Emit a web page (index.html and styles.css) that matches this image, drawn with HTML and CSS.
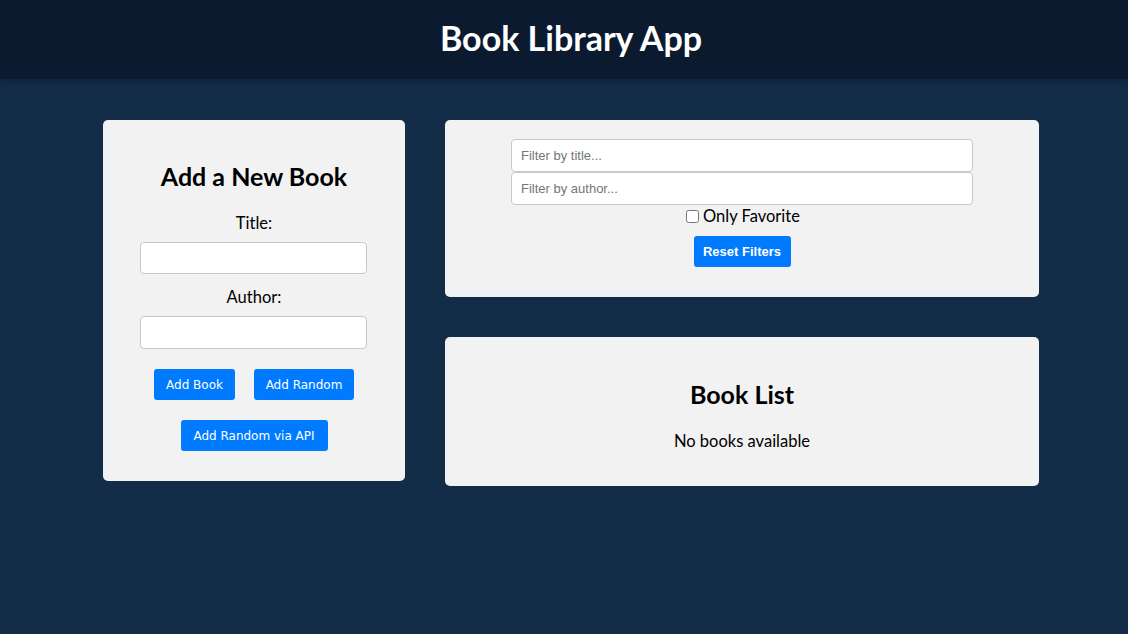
FILE: index.html
```html
<!DOCTYPE html>
<html lang="en">
<head>
<meta charset="utf-8">
<title>Book Library App</title>
<link rel="stylesheet" href="styles.css">
</head>
<body>
<header class="app-header">
  <h1 class="app-title">Book Library App</h1>
</header>
<main class="app-main">
  <section class="card form-card">
    <h2 class="card-title">Add a New Book</h2>
    <label class="field-label label-title" for="title">Title:</label>
    <input class="field-input input-title" id="title" type="text">
    <label class="field-label label-author" for="author">Author:</label>
    <input class="field-input input-author" id="author" type="text">
    <div class="btn-row">
      <button class="btn btn-add">Add Book</button>
      <button class="btn btn-random">Add Random</button>
    </div>
    <div class="btn-row">
      <button class="btn btn-api">Add Random via API</button>
    </div>
  </section>
  <div class="right-col">
    <section class="card filter-card">
      <input class="filter-input" type="text" placeholder="Filter by title...">
      <input class="filter-input" type="text" placeholder="Filter by author...">
      <label class="fav-label"><input type="checkbox" class="fav-check">Only Favorite</label>
      <button class="btn btn-reset">Reset Filters</button>
    </section>
    <section class="card list-card">
      <h2 class="card-title">Book List</h2>
      <p class="empty">No books available</p>
    </section>
  </div>
</main>
</body>
</html>
```

FILE: styles.css
```css
* { box-sizing: border-box; }
html, body { margin: 0; padding: 0; }
body {
  background: #132c48;
  font-family: Lato, "Noto Sans", sans-serif;
  color: #000;
  min-height: 634px;
}
.app-header {
  background: #0b1a2e;
  height: 79px;
  display: flex;
  align-items: center;
  justify-content: center;
  padding-left: 14px;
  box-shadow: 0 2px 6px rgba(0,0,0,0.25);
}
.app-title {
  margin: 0;
  color: #fff;
  font-size: 34px;
  font-weight: 700;
  line-height: 1;
  padding-bottom: 4px;
}
.app-main {
  display: flex;
  align-items: flex-start;
  gap: 40px;
  padding: 41px 89px 0 103px;
}
.card {
  background: #f2f2f2;
  border-radius: 5px;
}
.form-card {
  width: 302px;
  display: flex;
  flex-direction: column;
  align-items: center;
  padding: 42px 0 30px;
}
.card-title {
  margin: 0;
  font-size: 25px;
  font-weight: 700;
  line-height: 29px;
}
.field-label {
  font-size: 16.5px;
  line-height: 19px;
}
.label-title { margin-top: 23px; }
.input-title { margin-top: 9px; }
.label-author { margin-top: 14px; }
.input-author { margin-top: 9px; }
.field-input {
  width: 227px;
  height: 32px;
  border: 1px solid #c8c8c8;
  border-radius: 4px;
  background: #fff;
  margin-left: -1px;
}
.input-author { height: 33px; }
.btn-row {
  display: flex;
  gap: 19px;
  margin-top: 20px;
}
.btn {
  background: #007bff;
  color: #fff;
  border: none;
  border-radius: 3px;
  height: 31px;
  font-family: "DejaVu Sans", Verdana, sans-serif;
  font-size: 12px;
  padding: 0;
  cursor: pointer;
}
.btn-add { width: 81px; }
.btn-random { width: 100px; }
.btn-api { width: 147px; }
.right-col {
  width: 594px;
  display: flex;
  flex-direction: column;
  gap: 40px;
}
.filter-card {
  height: 177px;
  display: flex;
  flex-direction: column;
  align-items: center;
  padding-top: 19px;
}
.filter-input {
  width: 462px;
  height: 33px;
  border: 1px solid #c8c8c8;
  border-radius: 4px;
  background: #fff;
  padding: 0 9px;
  font-family: "Liberation Sans", Arial, sans-serif;
  font-size: 13px;
  margin: 0;
}
.filter-input::placeholder { color: #757575; }
.fav-label {
  display: flex;
  align-items: center;
  font-size: 16.5px;
  line-height: 19px;
  margin-top: 2px;
  margin-left: 2px;
}
.fav-check {
  width: 13px;
  height: 13px;
  margin: 0 4px 0 0;
}
.btn-reset {
  width: 97px;
  margin-top: 10px;
  font-family: "Liberation Sans", Arial, sans-serif;
  font-weight: 700;
  font-size: 13px;
}
.list-card {
  height: 149px;
  display: flex;
  flex-direction: column;
  align-items: center;
  padding-top: 43px;
}
.empty {
  margin: 23px 0 0;
  font-size: 16.5px;
  line-height: 19px;
}
```
